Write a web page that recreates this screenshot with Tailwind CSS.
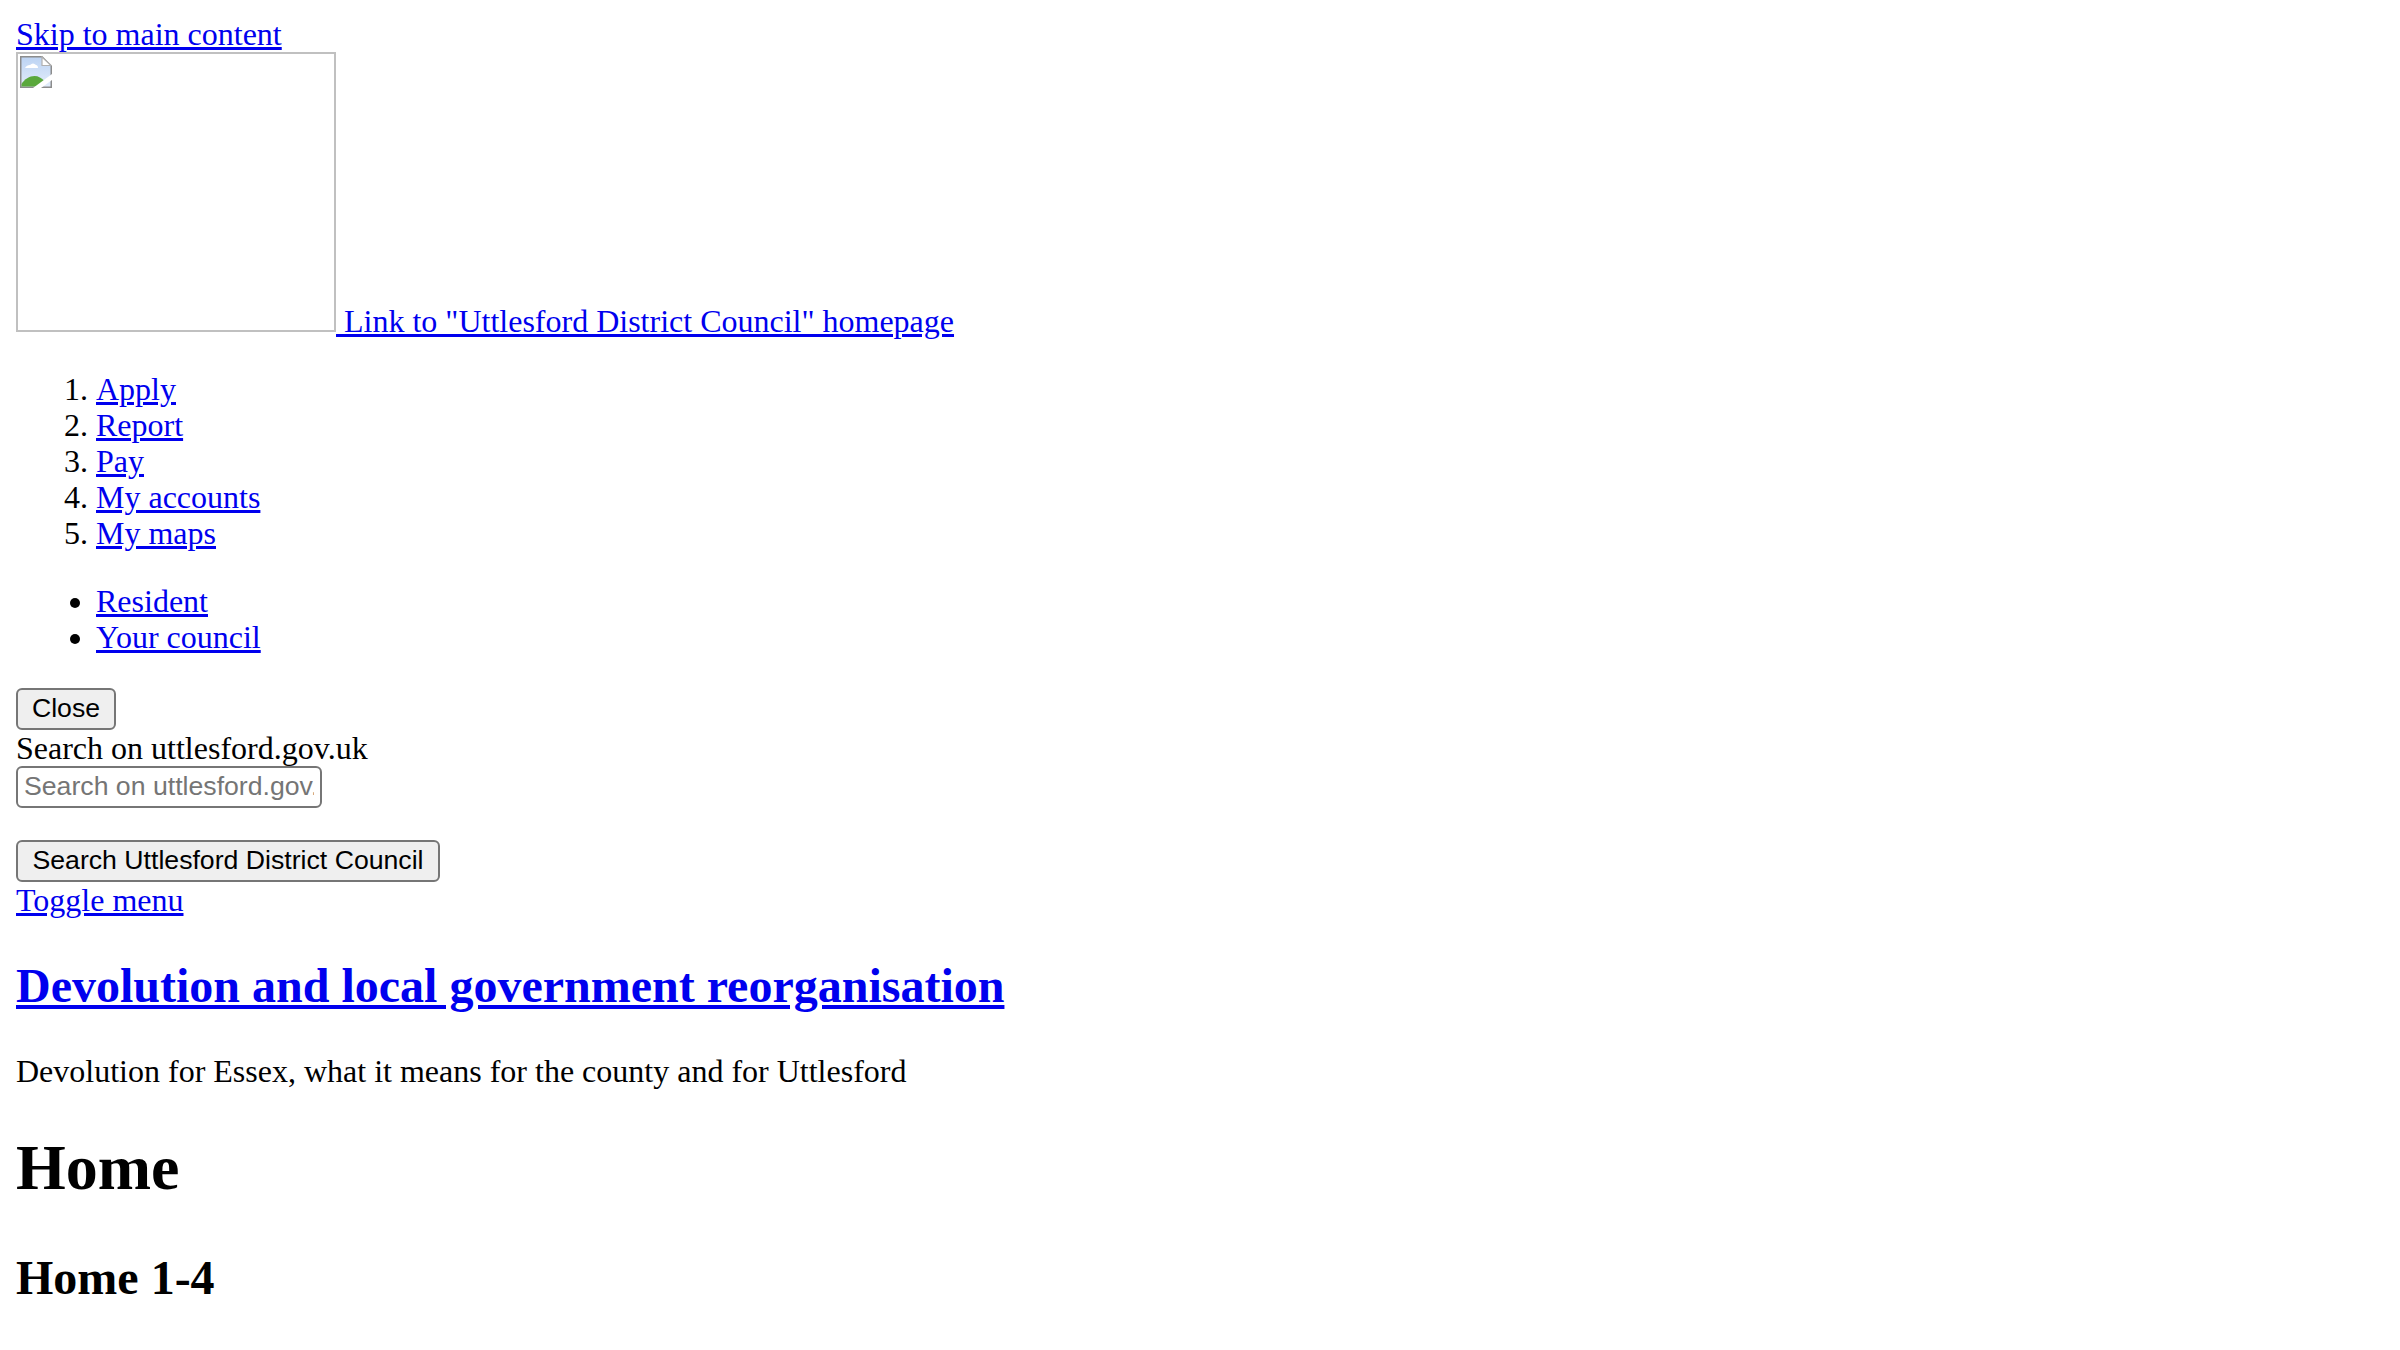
<!DOCTYPE html>
<html lang="en">

<head>
    <meta charset="UTF-8">
    <meta name="viewport" content="width=device-width, initial-scale=1.0">
    <script src="https://cdn.jsdelivr.net/npm/@tailwindcss/browser@4"></script>
    <title>Uttlesford District Council</title>
</head>

<body class="bg-white text-black font-['Liberation_Serif',serif] text-[32px] leading-[36px]">
    <div class="p-4">
        <a href="#main" class="block text-[#0000ee] underline">Skip to main content</a>

        <a href="#" class="block text-[#0000ee] underline">
            <span class="inline-block w-[320px] h-[280px] border-2 border-[#c0c0c0] p-[2px] align-baseline">
                <svg width="32" height="32" viewBox="0 0 32 32" class="block">
                    <defs>
                        <linearGradient id="sky" x1="0" y1="0" x2="0" y2="1">
                            <stop offset="0" stop-color="#bcd3f3" />
                            <stop offset="1" stop-color="#e3edfb" />
                        </linearGradient>
                    </defs>
                    <path d="M.75.75H22L31.25 10V31.25H.75Z" fill="url(#sky)" stroke="#8c8c8c" stroke-width="1.5" />
                    <path d="M22 1V9.5H31Z" fill="#fff" stroke="#b0b0b0" stroke-width="1.2" />
                    <path d="M5 12c1-2 3-3 5-3 2-2 4-2 6 0 1 0 2 1 2 3z" fill="#fff" />
                    <path d="M1.5 30.500V28c3-5 8-8 13-8 4 0 7 2 10 5l-6 5.500z" fill="#5aa83c" />
                    <path d="M13 32 32 18v6L21 32z" fill="#fff" />
                </svg>
            </span><span> Link to "Uttlesford District Council" homepage</span>
        </a>

        <ol class="list-decimal mt-[32px] pl-[80px]">
            <li><a href="#" class="text-[#0000ee] underline">Apply</a></li>
            <li><a href="#" class="text-[#0000ee] underline">Report</a></li>
            <li><a href="#" class="text-[#0000ee] underline">Pay</a></li>
            <li><a href="#" class="text-[#0000ee] underline">My accounts</a></li>
            <li><a href="#" class="text-[#0000ee] underline">My maps</a></li>
        </ol>

        <ul class="list-disc mt-[32px] pl-[80px]">
            <li><a href="#" class="text-[#0000ee] underline">Resident</a></li>
            <li><a href="#" class="text-[#0000ee] underline">Your council</a></li>
        </ul>

        <form class="mt-[32.8px]">
            <button type="button" class="block w-[100px] h-[42px] bg-[#efefef] border-2 border-[#767676] rounded-[6px] font-['Liberation_Sans',sans-serif] text-[26.67px] leading-none">Close</button>
            <label class="block">Search on uttlesford.gov.uk</label>
            <input type="text" placeholder="Search on uttlesford.gov.uk" class="block w-[306px] h-[42px] px-[6px] bg-white border-2 border-[#767676] rounded-[6px] font-['Liberation_Sans',sans-serif] text-[26.67px] placeholder:text-[#757575]">
            <button type="button" class="block mt-[32px] w-[424px] h-[42px] bg-[#efefef] border-2 border-[#767676] rounded-[6px] font-['Liberation_Sans',sans-serif] text-[26.67px] leading-none">Search Uttlesford District Council</button>
        </form>

        <a href="#" class="block text-[#0000ee] underline">Toggle menu</a>

        <h2 class="mt-[40px] text-[48px] leading-[55px] font-bold"><a href="#" class="text-[#0000ee] underline">Devolution and local government reorganisation</a></h2>
        <p class="mt-[40px]">Devolution for Essex, what it means for the county and for Uttlesford</p>

        <h1 class="mt-[42px] text-[64px] leading-[74px] font-bold">Home</h1>
        <h2 class="mt-[45px] text-[48px] leading-[55px] font-bold">Home 1-4</h2>
    </div>
</body>

</html>
